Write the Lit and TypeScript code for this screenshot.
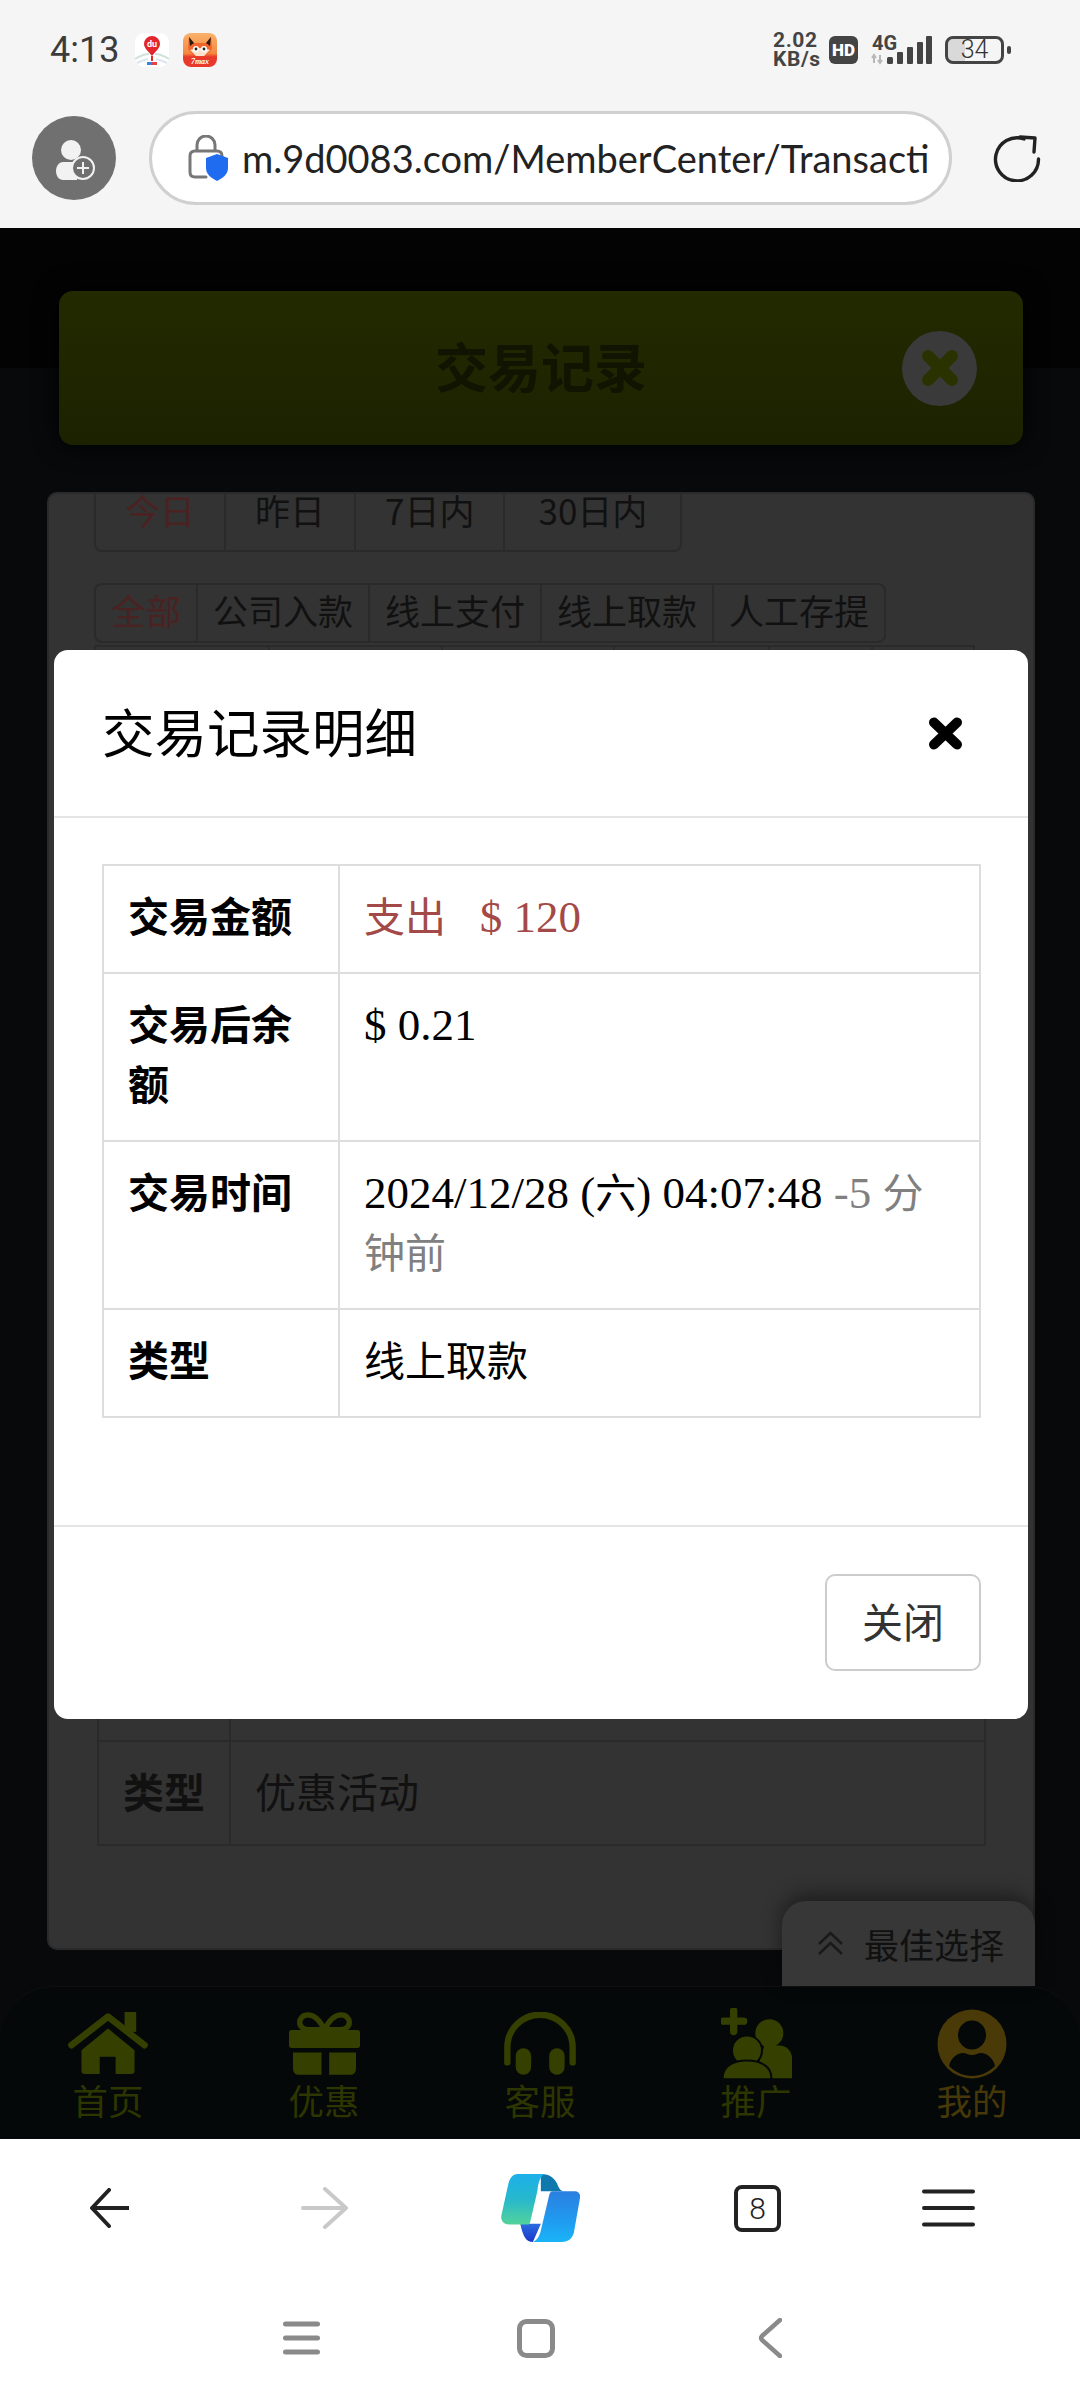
import { LitElement, html, css, svg } from "lit";
import { customElement } from "lit/decorators.js";

const GREEN = "#354000";
const NAVBG = "#050808";

const homeIcon = svg`<svg class="ic" width="80" height="63" viewBox="0 0 240 190"><path d="M170 0h35v60h-35z" fill="${GREEN}"/><path d="M120 50 40 115v62q0 10 10 10h45v-52h48v52h47q10 0 10-10v-62z" fill="${GREEN}"/><path d="M10 100 120 14 230 100" fill="none" stroke="${GREEN}" stroke-width="20" stroke-linecap="round" stroke-linejoin="round"/></svg>`;
const giftIcon = svg`<svg class="ic" width="71" height="63" viewBox="0 0 212 187"><rect y="53" width="212" height="54" rx="8" fill="${GREEN}"/><path d="M12 120h85v67H30q-18 0-18-18zM120 120h80v49q0 18-18 18h-62z" fill="${GREEN}"/><path d="M106 52C90 20 72 8 56 8 40 8 32 20 32 30c0 14 12 22 28 22zM106 52c16-32 34-44 50-44 16 0 24 12 24 22 0 14-12 22-28 22z" fill="none" stroke="${GREEN}" stroke-width="16"/></svg>`;
const phoneIcon = svg`<svg class="ic" width="72" height="63" viewBox="0 0 215 187"><path d="M10 150V105A97 97 0 0 1 205 105V150" fill="none" stroke="${GREEN}" stroke-width="19" stroke-linecap="round"/><rect x="35" y="108" width="46" height="79" rx="23" fill="${GREEN}"/><rect x="135" y="108" width="46" height="79" rx="23" fill="${GREEN}"/></svg>`;
const usersIcon = svg`<svg class="ic" width="71" height="71" viewBox="0 0 213 212"><path d="M38 8v62M8 39h60" stroke="${GREEN}" stroke-width="22" stroke-linecap="round"/><circle cx="145" cy="75" r="42" fill="${GREEN}"/><path d="M130 112h45a38 38 0 0 1 38 38v60H100z" fill="${GREEN}"/><circle cx="78" cy="127" r="42" fill="${GREEN}" stroke="${NAVBG}" stroke-width="12" paint-order="stroke"/><path d="M8 210c0-35 32-50 70-50s70 15 70 50z" fill="${GREEN}" stroke="${NAVBG}" stroke-width="12" paint-order="stroke"/></svg>`;
const meIcon = svg`<svg class="ic" width="70" height="70" viewBox="0 0 70 70"><circle cx="35" cy="35" r="34.5" fill="#4a3a08"/><ellipse cx="35" cy="26" rx="14" ry="14.5" fill="${NAVBG}"/><path d="M12 57c2-9 9-13 14-13 3 0 5 2 9 2s6-2 9-2c5 0 12 4 14 13-6 6-14 10-23 10s-17-4-23-10z" fill="${NAVBG}"/></svg>`;

const duIcon = svg`<svg width="34" height="34" viewBox="0 0 34 34"><rect width="34" height="34" rx="9" fill="#fff"/><path d="M0 26q8-5 14-5M34 26q-8-5-14-5" stroke="#cfe3d8" stroke-width="2" fill="none"/><path d="M2 30q6-3 11-4M32 30q-6-3-11-4" stroke="#dbe6ee" stroke-width="2" fill="none"/><path d="M17 23C13 18 9 15 9 11a8 8 0 0 1 16 0c0 4-4 7-8 12z" fill="#e3262e"/><text x="17" y="14" text-anchor="middle" font-family="Roboto, sans-serif" font-size="9" font-weight="700" fill="#fff">du</text><path d="M16 23h2v5h-2z" fill="#e3262e"/><path d="M12 29h5v3h-5z" fill="#3d7fe0"/><path d="M17 29h5v3h-5z" fill="#e3404a"/></svg>`;
const foxIcon = svg`<svg width="34" height="34" viewBox="0 0 34 34"><defs><linearGradient id="fx" x1="0" y1="0" x2="0" y2="1"><stop offset="0" stop-color="#f9b26b"/><stop offset=".6" stop-color="#f5873f"/><stop offset=".7" stop-color="#e8392a"/><stop offset="1" stop-color="#e8392a"/></linearGradient></defs><rect width="34" height="34" rx="8" fill="url(#fx)"/><path d="M6 4l5 6h12l5-6 1 12-5 6H10l-5-6z" fill="#f0652c"/><path d="M6 4l5 6-4 3zM28 4l-5 6 4 3z" fill="#2c1b12"/><path d="M7 17q10-4 20 0l-6 6h-8z" fill="#fde3cf"/><circle cx="13" cy="16" r="3" fill="#fff"/><circle cx="21" cy="16" r="3" fill="#fff"/><circle cx="13" cy="16" r="1.4" fill="#222"/><circle cx="21" cy="16" r="1.4" fill="#222"/><text x="17" y="31" text-anchor="middle" font-family="Liberation Serif, serif" font-style="italic" font-weight="700" font-size="8" fill="#fff">7max</text></svg>`;

const signal = svg`<svg width="62" height="30" viewBox="0 0 62 30"><path d="M3 21v7M1 23l2-3 2 3M9 27v-7M7 25l2 3 2-3" stroke="#b8b8b8" stroke-width="2" fill="none"/><rect x="16" y="22" width="6" height="7" rx="1.5" fill="#444"/><rect x="26" y="17" width="6" height="12" rx="1" fill="#444"/><rect x="36" y="12" width="6" height="17" rx="1" fill="#444"/><rect x="46" y="7" width="6" height="22" rx="1" fill="#444"/><rect x="55" y="1" width="6" height="28" rx="1" fill="#444"/></svg>`;

const avatarIcon = svg`<svg width="84" height="84" viewBox="0 0 84 84"><circle cx="39" cy="34" r="10" fill="#f2f2f2"/><path d="M31 46h12c2 0 4 1 5 2l-3 16H31c-4 0-7-4-7-9s3-9 7-9z" fill="#f2f2f2"/><circle cx="51" cy="52" r="11" fill="#707070" stroke="#f2f2f2" stroke-width="2"/><path d="M51 46v12M45 52h12" stroke="#f2f2f2" stroke-width="2"/></svg>`;
const lockIcon = svg`<svg width="40" height="46" viewBox="0 0 40 46"><path d="M9 16V10a9 9 0 0 1 18 0v6" fill="none" stroke="#777" stroke-width="3"/><path d="M18 42H7q-5 0-5-5V21q0-5 5-5h22q5 0 5 5v2" fill="none" stroke="#777" stroke-width="3" stroke-linecap="round"/><path d="M29 19l11 4v10c0 6-5 10-11 13-6-3-11-7-11-13V23z" fill="#1f6cf0"/></svg>`;
const refreshIcon = svg`<svg class="refresh" width="48" height="48" viewBox="0 0 48 48"><path d="M45.500 25A21.500 21.500 0 1 1 31 5" fill="none" stroke="#222" stroke-width="3.400" stroke-linecap="round"/><path d="M27 3l15 1-1 14" fill="none" stroke="#222" stroke-width="3.400" stroke-linecap="round" stroke-linejoin="round"/></svg>`;

const backIcon = svg`<svg class="back" width="39" height="40" viewBox="0 0 39 40"><path d="M19 2 2 20l17 18M3 20h36" fill="none" stroke="#222" stroke-width="4" stroke-linecap="round" stroke-linejoin="round"/></svg>`;
const fwdIcon = svg`<svg class="fwd" width="47" height="42" viewBox="0 0 47 42"><path d="M24 2l21 19-21 19M2 21h42" fill="none" stroke="#c9c9c9" stroke-width="4" stroke-linecap="round" stroke-linejoin="round"/></svg>`;
const copilot = svg`<svg class="cop" width="79" height="68" viewBox="0 0 238 205"><defs><linearGradient id="c1" x1="0" y1="0" x2="0" y2="1"><stop offset="0" stop-color="#1cb0ea"/><stop offset=".5" stop-color="#27b8cc"/><stop offset="1" stop-color="#52d39a"/></linearGradient><linearGradient id="c2" x1="0" y1="0" x2="0" y2="1"><stop offset="0" stop-color="#2b7fe0"/><stop offset=".6" stop-color="#1f9cf0"/><stop offset="1" stop-color="#1ab4f8"/></linearGradient><linearGradient id="c3" x1="0" y1="0" x2="0" y2="1"><stop offset="0" stop-color="#2a6be0"/><stop offset="1" stop-color="#1a37c8"/></linearGradient></defs><path d="M120 0c28 0 44 14 52 36 4 10 10 16 20 16h-72z" fill="#0f78ad"/><path d="M58 150h62l-24 55c-20 0-30-16-38-55z" fill="url(#c3)"/><path d="M50 0h80c-12 10-18 25-20 50L88 145c-1 4-3 7-6 7H24C8 152-2 140 1 125L22 30C26 12 36 0 50 0z" fill="url(#c1)"/><path d="M155 52h68c11 0 17 9 15 20l-18 103c-4 20-18 30-36 30H95c13-5 21-17 25-35l25-105c2-8 5-13 10-13z" fill="url(#c2)"/></svg>`;
const menuIcon = svg`<svg class="menu" width="53" height="38" viewBox="0 0 53 38"><path d="M2 2.500h49M2 19h49M2 35.500h49" stroke="#222" stroke-width="4" stroke-linecap="round"/></svg>`;
const sysMenu = svg`<svg class="smenu" width="37" height="34" viewBox="0 0 37 34"><path d="M2.500 3h32M2.500 17h32M2.500 31h32" stroke="#8a8a8a" stroke-width="5" stroke-linecap="round"/></svg>`;
const sysHome = svg`<svg class="shome" width="38" height="39" viewBox="0 0 38 39"><rect x="2.500" y="2.500" width="33" height="34" rx="7" fill="none" stroke="#8a8a8a" stroke-width="5"/></svg>`;
const sysBack = svg`<svg class="sback" width="24" height="40" viewBox="0 0 24 40"><path d="M22 2 4 18q-2 2 0 4l18 16" fill="none" stroke="#8a8a8a" stroke-width="4.500" stroke-linecap="round"/></svg>`;

const nav = [
  { icon: homeIcon, label: "首页" },
  { icon: giftIcon, label: "优惠" },
  { icon: phoneIcon, label: "客服" },
  { icon: usersIcon, label: "推广" },
  { icon: meIcon, label: "我的", me: true },
];

const row3 = [172, 173, 172, 155, 103, 102];

@customElement("app-root")
export class AppRoot extends LitElement {
  static styles = css`
    :host { display: block; width: 1080px; height: 2400px; overflow: hidden; font-family: "Noto Sans CJK SC", "Liberation Sans", sans-serif; }
    .shell { display: flex; flex-direction: column; width: 1080px; height: 2400px; }

    .chrome { height: 228px; box-sizing: border-box; background: #f5f5f5; padding-top: 33px; }
    .status { display: flex; align-items: center; height: 34px; padding: 0 0 0 50px; }
    .time { font: 400 36px/34px Roboto, sans-serif; color: #3c3c3c; width: 85px; }
    .apps { display: flex; gap: 14px; }
    .apps svg { display: block; }
    .sys { margin-left: auto; display: flex; align-items: center; padding-right: 76px; }
    .speed { font: 700 21px/19px Roboto, sans-serif; color: #444; width: 56px; letter-spacing: .6px; }
    .hd { width: 29px; height: 28px; border-radius: 6px; background: #444; color: #fff; font: 900 17px/28px Roboto, sans-serif; text-align: center; }
    .net { position: relative; margin-left: 13px; width: 62px; height: 30px; }
    .net svg { display: block; }
    .g4 { position: absolute; left: 1px; top: -1px; font: 700 20px/18px Roboto, sans-serif; color: #444; }
    .batt { position: relative; margin-left: 12px; width: 59px; height: 28px; box-sizing: border-box; border: 3px solid #444; border-radius: 8px; font: 300 25px/22px Roboto, sans-serif; color: #333; text-align: center; background: linear-gradient(90deg, #d9d9d9 0 17px, transparent 17px); background-clip: padding-box; }
    .batt::after { content: ""; position: absolute; right: -10px; top: 7px; width: 4px; height: 8px; background: #444; border-radius: 2px; }

    .addr { display: flex; align-items: center; margin-top: 44px; padding-left: 32px; }
    .avatar { width: 84px; height: 84px; border-radius: 50%; background: #707070; }
    .avatar svg { display: block; }
    .url { margin-left: 33px; width: 803px; height: 94px; box-sizing: border-box; border: 3px solid #d0d0d0; border-radius: 47px; background: #fff; display: flex; align-items: center; padding-left: 36px; overflow: hidden; }
    .url svg { flex: none; }
    .url span { margin-left: 14px; width: 692px; overflow: hidden; white-space: nowrap; font: 400 38px/48px Lato, "Open Sans", sans-serif; color: #222; }
    .refresh { margin-left: 41px; display: block; }

    .page { position: relative; height: 1911px; display: flex; flex-direction: column; background: linear-gradient(#030303 140px, #07090b 140px); }
    .hero { margin: 63px 57px 0 59px; height: 154px; border-radius: 14px; background: linear-gradient(#232a00, #1c2200); box-shadow: 0 0 24px #000; display: grid; grid-template-columns: 1fr auto 1fr; align-items: center; }
    .hero h1 { grid-column: 2; margin: -6px 0 0; font-size: 53px; font-weight: 700; line-height: 70px; color: #101400; }
    .hero .x { grid-column: 3; justify-self: end; margin-right: 46px; width: 75px; height: 75px; border-radius: 50%; background: #3a3a3a; display: flex; align-items: center; justify-content: center; }

    .panel { margin: 47px 45px 0 47px; height: 1458px; box-sizing: border-box; border: 2px solid #2a2a2a; border-radius: 10px; background: #333; overflow: hidden; display: flex; flex-direction: column; padding: 0 0 0 45px; }
    .tabs { display: flex; align-self: flex-start; border: 2px solid #2a2a2a; font-size: 35px; color: #111; border-radius: 8px; }
    .tabs div { box-sizing: border-box; text-align: center; border-left: 2px solid #2a2a2a; }
    .tabs div:first-child { border-left: 0; }
    .tabs .on { color: #4a2222; }
    .t1 { margin-top: -25px; height: 79px; line-height: 78px; }
    .t1 div { padding: 0 29px; }
    .t1 div:last-child { padding: 0 33px; }
    .t2 { margin-top: 31px; height: 56px; line-height: 50px; }
    .t2 div { padding: 0 15px; }
    .t3 { margin-top: 2px; height: 56px; border-radius: 0; }
    .under { margin: auto 0 102px 3px; width: 889px; border-collapse: collapse; font-size: 41px; color: #111; }
    .under th, .under td { border: 2px solid #2a2a2a; text-align: left; line-height: 60px; padding: 18px 24px 24px; }
    .under th { width: 82px; }
    .under .hid td, .under .hid th { height: 60px; }

    .best { position: absolute; right: 45px; bottom: 153px; width: 253px; height: 85px; box-sizing: border-box; padding-left: 35px; display: flex; align-items: center; gap: 20px; border-radius: 24px 24px 0 0; background: #373737; box-shadow: 0 -6px 20px rgba(0,0,0,.45); font-size: 35px; color: #111; }
    .best svg { flex: none; }

    .bar { margin-top: 36px; height: 153px; box-sizing: border-box; padding-top: 21px; background: #050808; border-radius: 54px 54px 0 0; border-top: 1px solid #0e1210; display: grid; grid-template-columns: repeat(5, 216px); }
    .item { display: flex; flex-direction: column; align-items: center; }
    .slot { height: 71px; display: flex; align-items: center; justify-content: center; }
    .ic { display: block; }
    .item span { margin-top: -2px; font-size: 35.5px; line-height: 46px; color: #2d3600; }
    .item.me span { color: #463808; }

    .modal { position: absolute; left: 54px; top: 422px; width: 974px; background: #fff; border-radius: 14px; color: #000; }
    .mhead { height: 166px; border-bottom: 2px solid #e5e5e5; display: flex; align-items: center; justify-content: space-between; padding: 0 65px 0 48px; }
    .mhead h2 { margin: -6px 0 0; font-size: 52.500px; font-weight: 400; line-height: 70px; }
    .mhead svg { display: block; }
    .mbody { padding: 46px 47px 107px 48px; }
    table.info { width: 879px; border-collapse: collapse; font-size: 41px; table-layout: fixed; }
    .info th, .info td { border: 2px solid #ddd; text-align: left; vertical-align: top; line-height: 60px; padding: 18px 28px 28px 24px; font-weight: 400; }
    .info th { width: 186px; font-weight: 700; padding-left: 24px; padding-right: 24px; }
    .n { font: 400 45px/0 "Liberation Serif", "Noto Sans CJK SC", serif; }
    .red { color: #a34a48; }
    .muted { color: #808080; }
    .mfoot { border-top: 2px solid #e5e5e5; padding: 47px 47px 48px 0; display: flex; justify-content: flex-end; }
    .close { width: 156px; height: 97px; box-sizing: border-box; border: 2px solid #ccc; border-radius: 10px; background: #fff; font: 400 41px/88px "Noto Sans CJK SC", sans-serif; color: #333; text-align: center; }

    .foot { flex: 1; background: #fff; }
    .tools { display: flex; align-items: center; height: 138px; padding-left: 90px; box-sizing: border-box; }
    .fwd { margin-left: 172px; display: block; }
    .cop { margin-left: 153px; display: block; }
    .tab { margin-left: 154px; width: 47px; height: 47px; box-sizing: border-box; border: 4px solid #222; border-radius: 8px; font: 300 30px/39px Roboto, sans-serif; color: #222; text-align: center; }
    .menu { margin-left: 141px; display: block; }
    .back { display: block; }
    .sysnav { display: flex; align-items: center; height: 40px; margin-top: 41px; padding-left: 283px; }
    .smenu { display: block; }
    .shome { margin-left: 197px; display: block; }
    .sback { margin-left: 203px; display: block; }
  `;

  render() {
    return html`<div class="shell">
      <div class="chrome">
        <div class="status">
          <div class="time">4:13</div>
          <div class="apps">${duIcon}${foxIcon}</div>
          <div class="sys">
            <div class="speed">2.02<br />KB/s</div>
            <div class="hd">HD</div>
            <div class="net"><span class="g4">4G</span>${signal}</div>
            <div class="batt">34</div>
          </div>
        </div>
        <div class="addr">
          <div class="avatar">${avatarIcon}</div>
          <div class="url">${lockIcon}<span>m.9d0083.com/MemberCenter/Transacti</span></div>
          ${refreshIcon}
        </div>
      </div>

      <div class="page">
        <div class="hero">
          <h1>交易记录</h1>
          <div class="x"><svg width="42" height="42" viewBox="0 0 42 42"><path d="M9 9l24 24M33 9 9 33" stroke="#2a3300" stroke-width="12" stroke-linecap="round"/></svg></div>
        </div>
        <div class="panel">
          <div class="tabs t1"><div class="on">今日</div><div>昨日</div><div>7日内</div><div>30日内</div></div>
          <div class="tabs t2"><div class="on">全部</div><div>公司入款</div><div>线上支付</div><div>线上取款</div><div>人工存提</div></div>
          <div class="tabs t3">${row3.map((w) => html`<div style="width:${w}px"></div>`)}</div>
          <table class="under">
            <tr class="hid"><th></th><td></td></tr>
            <tr><th>类型</th><td>优惠活动</td></tr>
          </table>
        </div>
        <div class="best">
          <svg width="27" height="25" viewBox="0 0 27 25"><path d="M2 13 13.500 2 25 13M2 23 13.500 12 25 23" fill="none" stroke="#1a1a1a" stroke-width="2.500"/></svg>
          <span>最佳选择</span>
        </div>
        <div class="bar">
          ${nav.map((n) => html`<div class="item ${n.me ? "me" : ""}"><div class="slot">${n.icon}</div><span>${n.label}</span></div>`)}
        </div>

        <div class="modal">
          <div class="mhead">
            <h2>交易记录明细</h2>
            <svg width="35" height="33" viewBox="0 0 35 33"><path d="M6 5.500l23 22M29 5.500l-23 22" stroke="#000" stroke-width="10" stroke-linecap="round"/></svg>
          </div>
          <div class="mbody">
            <table class="info">
              <tr><th>交易金额</th><td class="red">支出<span class="n">&nbsp;&nbsp;&nbsp;$ 120</span></td></tr>
              <tr><th>交易后余额</th><td><span class="n">$ 0.21</span></td></tr>
              <tr><th>交易时间</th><td><span class="n">2024/12/28 (</span>六<span class="n">) 04:07:48 </span><span class="muted"><span class="n">-5 </span>分钟前</span></td></tr>
              <tr><th>类型</th><td>线上取款</td></tr>
            </table>
          </div>
          <div class="mfoot"><div class="close">关闭</div></div>
        </div>
      </div>

      <div class="foot">
        <div class="tools">${backIcon}${fwdIcon}${copilot}<div class="tab">8</div>${menuIcon}</div>
        <div class="sysnav">${sysMenu}${sysHome}${sysBack}</div>
      </div>
    </div>`;
  }
}
